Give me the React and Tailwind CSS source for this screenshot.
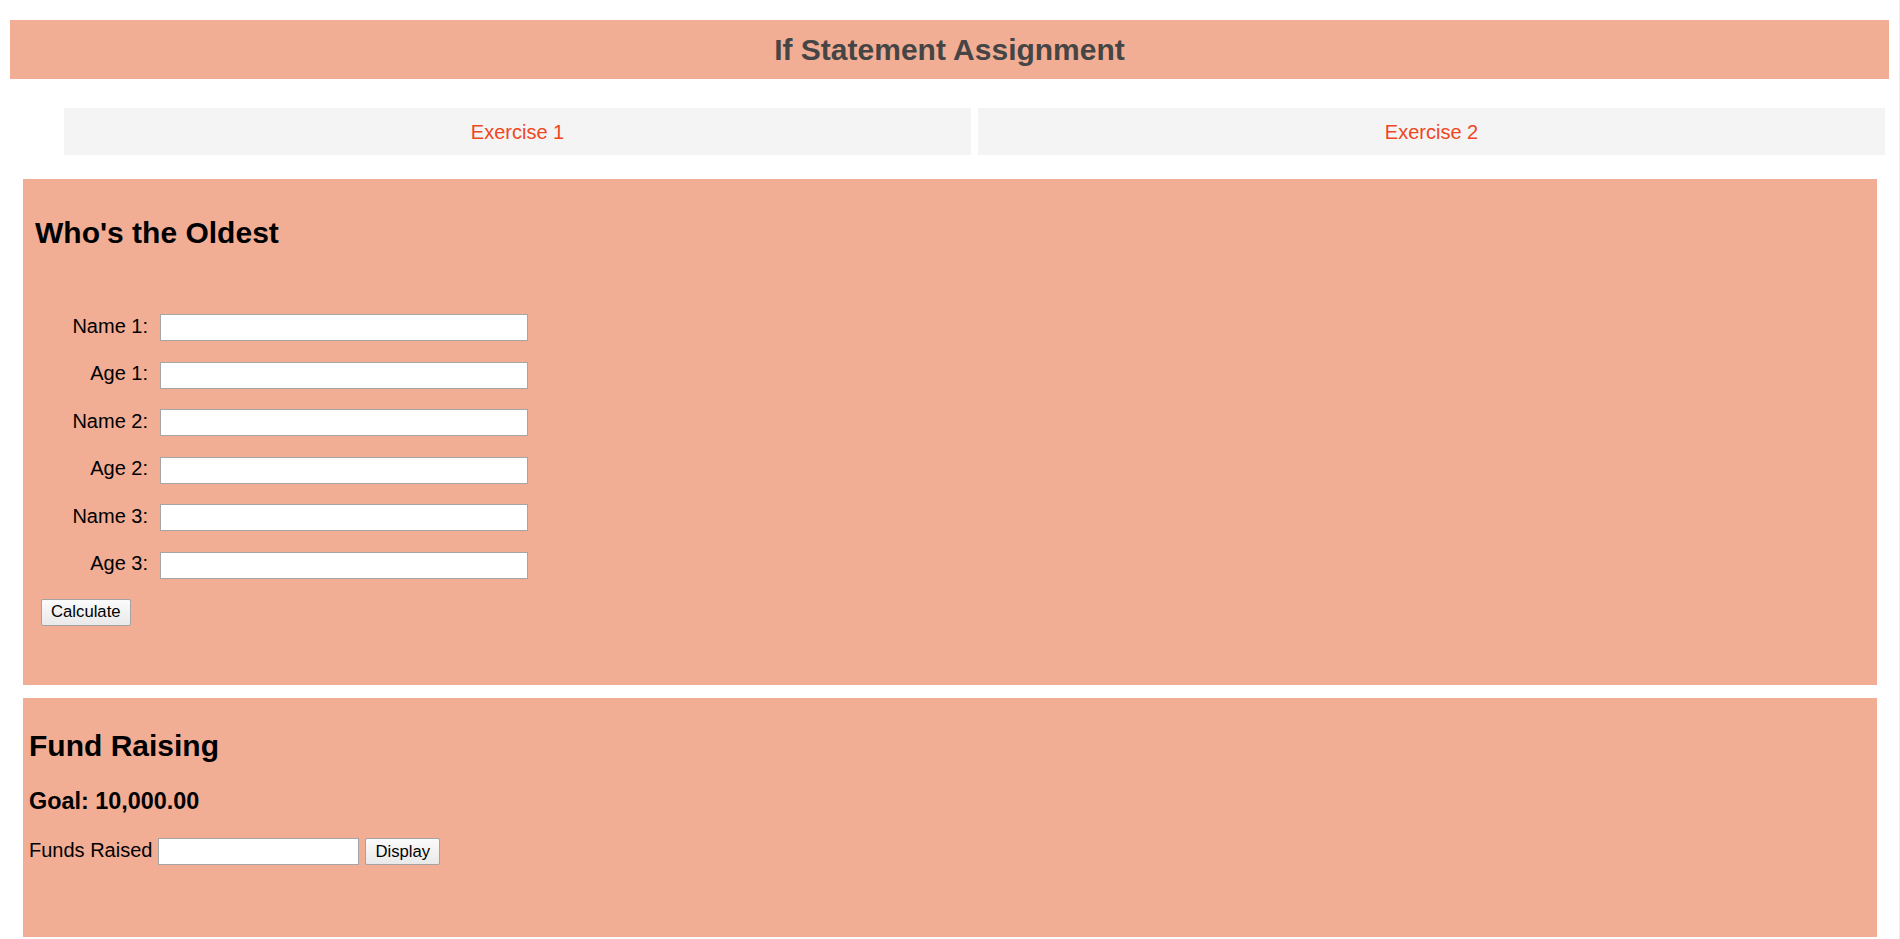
import React from 'react';

const rows = ['Name 1:', 'Age 1:', 'Name 2:', 'Age 2:', 'Name 3:', 'Age 3:'];

const btn =
  'h-[27px] px-[9px] border border-[#a3a3a3] bg-[linear-gradient(to_bottom,#fbfbfb,#e9e9e9)] text-[16.7px] leading-none text-black rounded-[2px]';

const App = () => {
  return (
    <div className="flex w-[1900px] min-h-[939px] bg-white text-black font-['Liberation_Sans',Arial,sans-serif]">
      <div className="w-[1899px] px-[10px] pt-[20px]">
        {/* Header */}
        <div className="h-[59px] flex items-center justify-center bg-[#f2ad95]">
          <h1 className="text-[30px] font-bold leading-[34px] text-[#454545]">If Statement Assignment</h1>
        </div>

        {/* Nav */}
        <div className="mt-[29px] ml-[54px] mr-[4px] flex gap-[7px]">
          <a className="flex-1 h-[47px] flex items-center justify-center bg-[#f4f4f4] text-[20px] text-[#f0461e]">
            Exercise 1
          </a>
          <a className="flex-1 h-[47px] flex items-center justify-center bg-[#f4f4f4] text-[20px] text-[#f0461e]">
            Exercise 2
          </a>
        </div>

        {/* Who's the Oldest */}
        <section className="mt-[24px] ml-[13px] mr-[12px] bg-[#f2ad95] pt-[37px] px-[12px] pb-[59px]">
          <h2 className="text-[30px] font-bold leading-[34px]">Who's the Oldest</h2>
          <div className="mt-[64px]">
            {rows.map((label) => (
              <div key={label} className="h-[47.5px] flex items-baseline">
                <span className="w-[113px] text-right text-[20px] leading-[21px]">{label}</span>
                <input
                  type="text"
                  className="ml-[12px] w-[368px] h-[27px] bg-white border border-[#a5a5a5] outline-none text-[16.7px] px-[2px]"
                />
              </div>
            ))}
            <button className={`ml-[6px] ${btn}`}>Calculate</button>
          </div>
        </section>

        {/* Fund Raising */}
        <section className="mt-[13px] ml-[13px] mr-[12px] bg-[#f2ad95] pt-[31px] pl-[6px] pb-[72px]">
          <h2 className="text-[30px] font-bold leading-[34px]">Fund Raising</h2>
          <h3 className="mt-[25px] text-[23.4px] font-bold leading-[27px]">Goal: 10,000.00</h3>
          <div className="mt-[23px] flex items-baseline">
            <span className="text-[20px] leading-[23px]">Funds Raised</span>
            <input
              type="text"
              className="ml-[6px] w-[201px] h-[27px] bg-white border border-[#a5a5a5] outline-none text-[16.7px] px-[2px]"
            />
            <button className={`ml-[6px] ${btn}`}>Display</button>
          </div>
        </section>
      </div>
      <div className="w-px bg-[#ececec]" />
    </div>
  );
};

export default App;
